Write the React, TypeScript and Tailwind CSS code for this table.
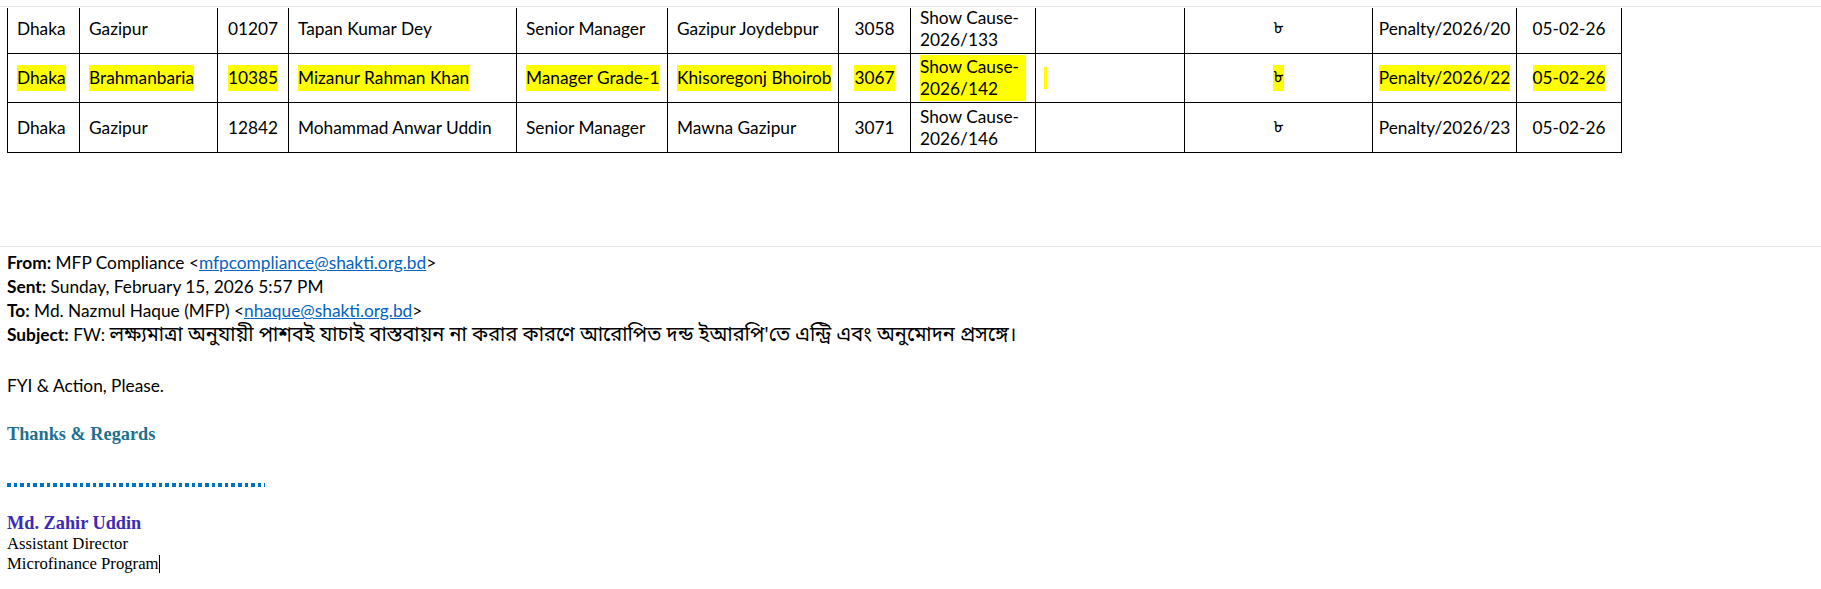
import React from 'react';

type Row = {
    cells: string[];
    marked?: boolean;
    height: string;
};

const rows: Row[] = [
    {
        cells: ["Dhaka", "Gazipur", "01207", "Tapan Kumar Dey", "Senior Manager", "Gazipur Joydebpur", "3058", "Show Cause-2026/133", "", "৮", "Penalty/2026/20", "05-02-26"],
        height: "h-[49px]",
    },
    {
        cells: ["Dhaka", "Brahmanbaria", "10385", "Mizanur Rahman Khan", "Manager Grade-1", "Khisoregonj Bhoirob", "3067", "Show Cause-2026/142", "", "৮", "Penalty/2026/22", "05-02-26"],
        marked: true,
        height: "h-[49px]",
    },
    {
        cells: ["Dhaka", "Gazipur", "12842", "Mohammad Anwar Uddin", "Senior Manager", "Mawna Gazipur", "3071", "Show Cause-2026/146", "", "৮", "Penalty/2026/23", "05-02-26"],
        height: "h-[50px]",
    },
];

// column index -> alignment (numbers, penalty ref and date sit centred)
const centred = [2, 6, 9, 10, 11];

const bn = { fontFamily: '"Noto Sans Bengali", "Noto Serif Bengali", "Lohit Bengali", "FreeSerif", sans-serif' };

const Cell = ({ text, col, marked }: { text: string; col: number; marked?: boolean }) => {
    const align = centred.includes(col) ? "justify-center text-center" : "justify-start";
    const wrap = col === 7 ? "whitespace-normal leading-[22px]" : "whitespace-nowrap";
    return (
        <div className={`border-r border-b border-black px-[9px] flex items-center ${align} ${wrap} overflow-hidden`}>
            {col === 8 && marked ? (
                <span className="inline-block w-[3px] h-[22px] bg-[#ffff00] -ml-[1px]" />
            ) : (
                <span
                    className={marked ? "bg-[#ffff00] py-[1px]" : ""}
                    style={col === 9 ? bn : undefined}
                >
                    {col === 7 ? (
                        <>
                            Show Cause-<wbr />
                            {text.replace("Show Cause-", "")}
                        </>
                    ) : (
                        text
                    )}
                </span>
            )}
        </div>
    );
};

const App = () => {
    return (
        <div className="w-[1821px] h-[589px] bg-white text-black overflow-hidden font-['Lato',sans-serif] text-[17.3px] leading-[24px]">
            {/* top rule */}
            <div className="mt-[6px] h-px bg-[#e3e3e3]" />

            {/* table, scrolled a few px so the first row is cut */}
            <div className="mt-px pl-[7px] overflow-hidden">
                <div className="-mt-[3px] w-[1615px] border-l border-black">
                    {rows.map((row, r) => (
                        <div
                            key={r}
                            className={`grid grid-cols-[72px_138px_71px_228px_151px_171px_72px_125px_149px_188px_144px_105px] ${row.height}`}
                        >
                            {row.cells.map((c, i) => (
                                <Cell key={i} text={c} col={i} marked={row.marked} />
                            ))}
                        </div>
                    ))}
                </div>
            </div>

            {/* message header */}
            <div className="mt-[93px] h-px bg-[#e3e3e3]" />
            <div className="pl-[7px] mt-[4px]">
                <div>
                    <b>From:</b> MFP Compliance &lt;
                    <a className="text-[#0563c1] underline">mfpcompliance@shakti.org.bd</a>&gt;
                </div>
                <div>
                    <b>Sent:</b> Sunday, February 15, 2026 5:57 PM
                </div>
                <div>
                    <b>To:</b> Md. Nazmul Haque (MFP) &lt;
                    <a className="text-[#0563c1] underline">nhaque@shakti.org.bd</a>&gt;
                </div>
                <div className="h-[24px] whitespace-nowrap">
                    <b>Subject:</b> FW:{" "}
                    <span className="text-[20px]" style={bn}>
                        লক্ষ্যমাত্রা অনুযায়ী পাশবই যাচাই বাস্তবায়ন না করার কারণে আরোপিত দন্ড ইআরপি'তে এন্ট্রি এবং অনুমোদন প্রসঙ্গে।
                    </span>
                </div>

                <div className="mt-[27px]">FYI &amp; Action, Please.</div>

                {/* signature */}
                <div className="mt-[24px] font-['Liberation_Serif',serif] font-bold text-[18.3px] text-[#1f718f]">
                    Thanks &amp; Regards
                </div>
                <div className="mt-[37px] w-[258px] h-[4px] bg-[repeating-linear-gradient(90deg,#0070c0_0_3.6px,transparent_3.6px_6.6px)]" />

                <div className="mt-[26px] font-['Liberation_Serif',serif] leading-[20px]">
                    <div className="font-bold text-[18.3px] text-[#3b2bb8]">Md. Zahir Uddin</div>
                    <div className="mt-px text-[16.7px]">Assistant Director</div>
                    <div className="text-[16.7px]">
                        Microfinance Program
                        <span className="inline-block w-px h-[18px] bg-black align-[-4px]" />
                    </div>
                </div>
            </div>
        </div>
    );
};

export default App;
